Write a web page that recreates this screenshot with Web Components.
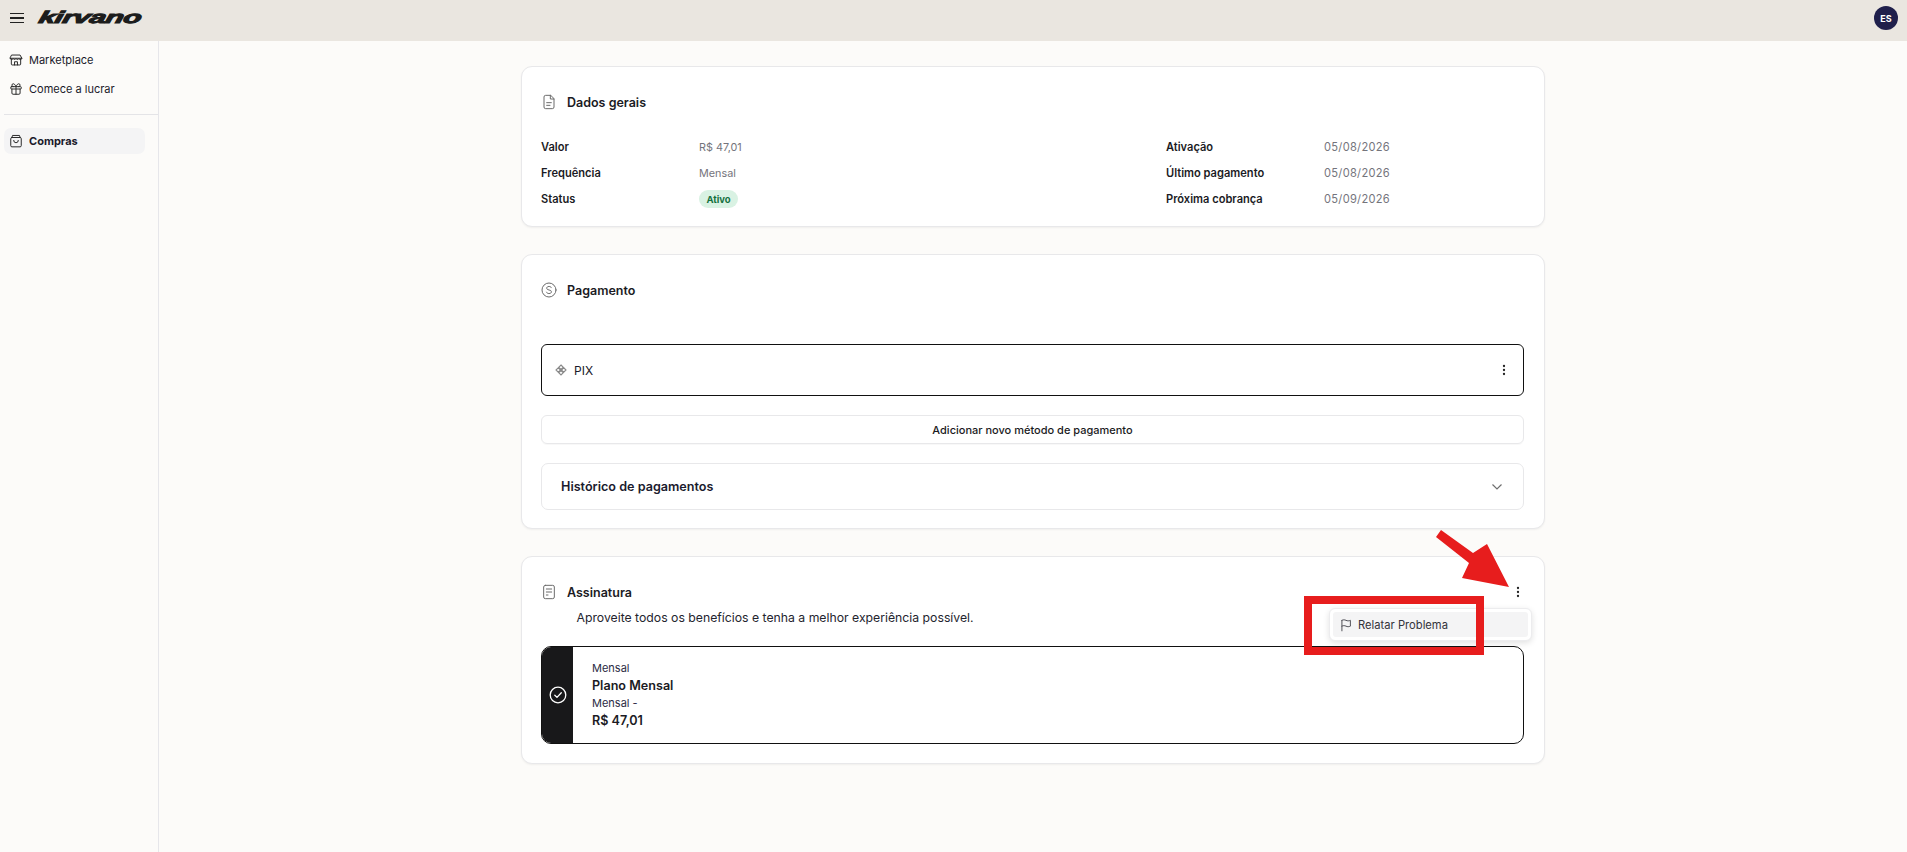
<!DOCTYPE html>
<html lang="pt-BR">
<head>
<meta charset="utf-8">
<title>Kirvano - Compras</title>
<style>
    html, body { margin: 0; padding: 0; height: 100%; overflow: hidden; background: #fcfbf9; }
    body { font-family: Inter, "Liberation Sans", sans-serif; font-size: 12px; color: #18181f; }
</style>
</head>
<body>
<k-app>
    <k-header slot="header"></k-header>
    <k-sidebar slot="sidebar">
        <k-nav-item icon="store">Marketplace</k-nav-item>
        <k-nav-item icon="gift">Comece a lucrar</k-nav-item>
        <k-nav-item slot="active" icon="bag" active>Compras</k-nav-item>
    </k-sidebar>

    <k-card icon="file" heading="Dados gerais" style="height:161px">
        <k-details>
            <k-row label="Valor">R$ 47,01</k-row>
            <k-row label="Ativação" date>05/08/2026</k-row>
            <k-row label="Frequência">Mensal</k-row>
            <k-row label="Último pagamento" date>05/08/2026</k-row>
            <k-row label="Status"><k-badge>Ativo</k-badge></k-row>
            <k-row label="Próxima cobrança" date>05/09/2026</k-row>
        </k-details>
    </k-card>

    <k-card icon="coin" heading="Pagamento" style="height:275px">
        <k-payment-list>
            <k-method>PIX</k-method>
            <k-add-button>Adicionar novo método de pagamento</k-add-button>
            <k-accordion>Histórico de pagamentos</k-accordion>
        </k-payment-list>
    </k-card>

    <k-card icon="list" heading="Assinatura" style="height:208px" menu>
        <k-plan-text>Aproveite todos os benefícios e tenha a melhor experiência possível.</k-plan-text>
        <k-plan></k-plan>
    </k-card>

    <k-menu></k-menu>
    <k-callout></k-callout>
</k-app>

<script>
// ICONOS -------------------------------------------------------------------------------------
const ICONS = {
    store: '<path d="M4 10v9a1.5 1.5 0 0 0 1.5 1.5h13A1.5 1.5 0 0 0 20 19v-9"/><path d="M5 3.5h14L22 9a2.6 2.6 0 0 1-5 .6 2.8 2.8 0 0 1-5 0 2.8 2.8 0 0 1-5 0A2.6 2.6 0 0 1 2 9z"/><path d="M2 9h20"/><path d="M9.5 20.5V15h5v5.5"/>',
    gift: '<rect x="3" y="8" width="18" height="4" rx="1"/><path d="M12 8v13"/><path d="M19 12v7a2 2 0 0 1-2 2H7a2 2 0 0 1-2-2v-7"/><path d="M7.5 8a2.5 2.5 0 0 1 0-5C10 3 12 8 12 8s2-5 4.500-5a2.500 2.500 0 0 1 0 5"/>',
    bag: '<rect x="3" y="6" width="18" height="16" rx="2"/><path d="M5 6l1-3.500h12L19 6"/><path d="M8 11a4 4 0 0 0 8 0"/>',
    file: '<path d="M14 2H7a2.500 2.500 0 0 0-2.500 2.500v15A2.500 2.500 0 0 0 7 22h10a2.500 2.500 0 0 0 2.500-2.500V7.500z"/><path d="M14 2v5.500h5.500"/><path d="M8.500 13h7M8.500 17h5"/>',
    coin: '<circle cx="12" cy="12" r="10.500"/><path d="M15.500 8.500C15 7.300 13.700 6.700 12 6.700c-2 0-3.500 1-3.500 2.600 0 3.700 7.200 1.700 7.200 5.400 0 1.600-1.600 2.600-3.700 2.600-1.800 0-3.200-.7-3.800-2"/>',
    list: '<rect x="4" y="2" width="16" height="20" rx="2.500"/><path d="M8 7.500h8M8 12h8M8 16.500h2.500"/>',
    flag: '<path d="M5 22V4"/><path d="M5 4c2-1.200 4.500-1.200 7 0s5 1.200 7.500 0v10c-2.500 1.200-5 1.200-7.500 0s-5-1.200-7 0"/>'
};

function icon(name, size, color, width) {
    return `<svg width="${size}" height="${size}" viewBox="0 0 24 24" fill="none" stroke="${color}" stroke-width="${width}" stroke-linecap="round" stroke-linejoin="round">${ICONS[name]}</svg>`;
}

const DOTS = `<svg width="12" height="12" viewBox="0 0 12 12" fill="#222"><circle cx="6" cy="2" r="1.150"/><circle cx="6" cy="6" r="1.150"/><circle cx="6" cy="10" r="1.150"/></svg>`;

// ELEMENTO BASE ------------------------------------------------------------------------------
class KBase extends HTMLElement {
    constructor() {
        super();
        this.attachShadow({mode: 'open'});
    }
    connectedCallback() {
        this.render();
    }
}

// LAYOUT -------------------------------------------------------------------------------------
class KApp extends KBase {
    render() {
        this.shadowRoot.innerHTML = `
            <style>
                :host { display: grid; grid-template-rows: 41px 1fr; grid-template-columns: 159px 1fr; height: 852px; position: relative; }
                .top { grid-column: 1 / 3; }
                main { display: flex; flex-direction: column; align-items: center; gap: 27px; padding-top: 25px; }
            </style>
            <div class="top"><slot name="header"></slot></div>
            <slot name="sidebar"></slot>
            <main><slot></slot></main>
        `;
    }
}

class KHeader extends KBase {
    render() {
        this.shadowRoot.innerHTML = `
            <style>
                :host { display: flex; align-items: center; height: 41px; background: #eae6e0; padding: 0 10px 5px; box-sizing: border-box; }
                .burger { display: flex; flex-direction: column; gap: 3px; width: 14px; margin-right: 15px; }
                .burger i { display: block; height: 1.500px; background: #222; }
                .logo { font: italic 900 17px "Liberation Sans", sans-serif; letter-spacing: -.3px; color: #1c1c1c;
                        display: inline-block; transform: scaleX(1.750) skewX(-8deg); transform-origin: left center;
                        -webkit-text-stroke: 1px #1c1c1c; }
                .avatar { margin-left: auto; width: 24px; height: 24px; border-radius: 50%; background: #1f1f4b; color: #fff;
                          font: 700 9px Inter, sans-serif; display: flex; align-items: center; justify-content: center;
                          margin-right: -1px; }
            </style>
            <div class="burger"><i></i><i></i><i></i></div>
            <span class="logo">kirvano</span>
            <div class="avatar">ES</div>
        `;
    }
}

class KSidebar extends KBase {
    render() {
        this.shadowRoot.innerHTML = `
            <style>
                :host { display: block; border-right: 1px solid #e6e6ea; box-sizing: border-box; height: 811px; padding: 4px 0 0 4px; }
                hr { border: 0; border-top: 1px solid #e4e4e7; margin: 11px 0 13px; }
                .items { padding-right: 13px; }
                .active { padding-right: 13px; }
            </style>
            <div class="items"><slot></slot></div>
            <hr>
            <div class="active"><slot name="active"></slot></div>
        `;
    }
}

class KNavItem extends KBase {
    render() {
        const active = this.hasAttribute('active');
        this.shadowRoot.innerHTML = `
            <style>
                :host { display: flex; align-items: center; gap: 6px; height: ${active ? 26 : 29}px; padding-left: 5px;
                        border-radius: 7px; background: ${active ? '#f4f4f5' : 'transparent'};
                        font-weight: ${active ? 700 : 400}; font-size: 11px; color: #1a1a2b; }
                svg { flex: none; }
            </style>
            ${icon(this.getAttribute('icon'), 14, '#2b2b2b', 1.700)}
            <span><slot></slot></span>
        `;
    }
}

// TARJETAS -----------------------------------------------------------------------------------
class KCard extends KBase {
    render() {
        this.shadowRoot.innerHTML = `
            <style>
                :host { display: block; box-sizing: border-box; width: 1024px; flex: none; background: #fff;
                        border: 1px solid #e8e8ea; border-radius: 11px; box-shadow: 0 1px 2px rgba(0,0,0,.05);
                        padding: 0 20px 0 19px; }
                header { display: flex; align-items: center; height: 70px; gap: 10px; font-size: 12.500px; font-weight: 600; color: #1b1b24; }
                header svg { flex: none; }
                .dots { margin-left: auto; display: ${this.hasAttribute('menu') ? 'flex' : 'none'}; margin-right: 0; }
            </style>
            <header>
                ${icon(this.getAttribute('icon'), 16, '#6b6b6b', 1.500)}
                <span>${this.getAttribute('heading')}</span>
                <span class="dots">${DOTS}</span>
            </header>
            <slot></slot>
        `;
    }
}

class KDetails extends KBase {
    render() {
        this.shadowRoot.innerHTML = `
            <style>
                :host { display: grid; grid-template-columns: 625px 1fr; grid-auto-rows: 26px; margin-top: -3px; }
            </style>
            <slot></slot>
        `;
    }
}

class KRow extends KBase {
    render() {
        const date = this.hasAttribute('date');
        this.shadowRoot.innerHTML = `
            <style>
                :host { display: flex; align-items: center; font-size: 11.100px; }
                b { width: 158px; font-weight: 600; color: #1b1b24; flex: none; }
                span { color: #74747c; font-size: ${date ? '11.100px' : '10.800px'}; letter-spacing: ${date ? '.3px' : '0'}; }
            </style>
            <b>${this.getAttribute('label')}</b>
            <span><slot></slot></span>
        `;
    }
}

class KBadge extends KBase {
    render() {
        this.shadowRoot.innerHTML = `
            <style>
                :host { display: inline-flex; align-items: center; justify-content: center; width: 39px; height: 18px;
                        border-radius: 9px; background: #d9f2e3; color: #15713f; font-size: 9.500px; font-weight: 700; letter-spacing: 0; }
            </style>
            <slot></slot>
        `;
    }
}

// PAGAMENTO ----------------------------------------------------------------------------------
class KPaymentList extends KBase {
    render() {
        this.shadowRoot.innerHTML = `
            <style>
                :host { display: flex; flex-direction: column; gap: 19px; padding-top: 19px; }
            </style>
            <slot></slot>
        `;
    }
}

class KMethod extends KBase {
    render() {
        this.shadowRoot.innerHTML = `
            <style>
                :host { display: flex; align-items: center; height: 52px; box-sizing: border-box; border: 1px solid #111;
                        border-radius: 6px; padding: 0 13px 0 13px; gap: 7px; font-size: 12px; color: #1a1a2b; }
                .dots { margin-left: auto; display: flex; }
                svg { flex: none; }
            </style>
            <svg width="12" height="12" viewBox="0 0 24 24" fill="none" stroke="#8a8a8a" stroke-width="2.200">
                <path d="M12 2l4.500 4.500L12 11 7.500 6.500zM12 13l4.500 4.500L12 22l-4.500-4.500zM6.500 7.500L11 12l-4.500 4.500L2 12zM17.500 7.500L22 12l-4.500 4.500L13 12z"/>
            </svg>
            <span><slot></slot></span>
            <span class="dots">${DOTS}</span>
        `;
    }
}

class KAddButton extends KBase {
    render() {
        this.shadowRoot.innerHTML = `
            <style>
                :host { display: flex; align-items: center; justify-content: center; height: 29px; box-sizing: border-box;
                        border: 1px solid #e8e8ea; border-radius: 6px; font-size: 11px; font-weight: 500; color: #1a1a22;
                        box-shadow: 0 1px 1px rgba(0,0,0,.03); }
            </style>
            <slot></slot>
        `;
    }
}

class KAccordion extends KBase {
    render() {
        this.shadowRoot.innerHTML = `
            <style>
                :host { display: flex; align-items: center; justify-content: space-between; height: 47px; box-sizing: border-box;
                        border: 1px solid #e8e8ea; border-radius: 7px; padding: 0 20px 0 19px; font-size: 12.600px; font-weight: 600; color: #1b1b2e; }
            </style>
            <span><slot></slot></span>
            <svg width="12" height="8" viewBox="0 0 12 8" fill="none" stroke="#6f6f6f" stroke-width="1.200"><path d="M1.500 1.500L6 6l4.500-4.500"/></svg>
        `;
    }
}

// ASSINATURA ---------------------------------------------------------------------------------
class KPlanText extends KBase {
    render() {
        this.shadowRoot.innerHTML = `
            <style>
                :host { display: block; margin: -17px 0 0 35.500px; height: 36px; font-size: 12.240px; line-height: 16px; color: #24242e; }
            </style>
            <slot></slot>
        `;
    }
}

class KPlan extends KBase {
    render() {
        this.shadowRoot.innerHTML = `
            <style>
                :host { display: flex; height: 98px; box-sizing: border-box; border: 1px solid #111; border-radius: 10px; overflow: hidden; }
                .strip { width: 31px; background: #18181a; display: flex; align-items: center; justify-content: center; flex: none; }
                .body { padding: 12px 0 0 19px; display: grid; grid-auto-rows: 17.600px; align-items: center; font-size: 11px; color: #2c2c44; }
                b { font-size: 12.600px; font-weight: 600; color: #1b1b24; }
            </style>
            <div class="strip">
                <svg width="18" height="18" viewBox="0 0 18 18" fill="none" stroke="#fff" stroke-width="1.300">
                    <circle cx="9" cy="9" r="7.800"/><path d="M5.800 9.200l2.200 2.200 4.300-4.600" stroke-linecap="round" stroke-linejoin="round"/>
                </svg>
            </div>
            <div class="body">
                <span>Mensal</span>
                <b>Plano Mensal</b>
                <span>Mensal -</span>
                <b>R$ 47,01</b>
            </div>
        `;
    }
}

// SUPERPUESTOS -------------------------------------------------------------------------------
class KMenu extends KBase {
    render() {
        this.shadowRoot.innerHTML = `
            <style>
                :host { position: absolute; left: 1329px; top: 608px; width: 203px; height: 33px; box-sizing: border-box; padding: 3px;
                        background: #fff; border: 1px solid #ececee; border-radius: 6px; box-shadow: 0 2px 6px rgba(0,0,0,.12); }
                div { display: flex; align-items: center; gap: 5px; height: 100%; padding-left: 6px; border-radius: 3px;
                      background: #f4f4f5; font-size: 11.200px; font-weight: 400; color: #33333b; }
            </style>
            <div>${icon('flag', 14, '#3a3a42', 1.500)}<span>Relatar Problema</span></div>
        `;
    }
}

class KCallout extends KBase {
    render() {
        this.shadowRoot.innerHTML = `
            <style>
                :host { position: absolute; inset: 0; pointer-events: none; display: block; }
                .box { position: absolute; left: 1304px; top: 596px; width: 180px; height: 59px; box-sizing: border-box; border: 8.500px solid #e71d1d; }
                svg { position: absolute; left: 0; top: 0; }
            </style>
            <div class="box"></div>
            <svg width="1907" height="852">
                <polygon fill="#e71d1d" points="1436,537 1441,530 1473,553 1487,544 1509,587 1462,578 1469,563"/>
            </svg>
        `;
    }
}

customElements.define('k-app', KApp);
customElements.define('k-header', KHeader);
customElements.define('k-sidebar', KSidebar);
customElements.define('k-nav-item', KNavItem);
customElements.define('k-card', KCard);
customElements.define('k-details', KDetails);
customElements.define('k-row', KRow);
customElements.define('k-badge', KBadge);
customElements.define('k-payment-list', KPaymentList);
customElements.define('k-method', KMethod);
customElements.define('k-add-button', KAddButton);
customElements.define('k-accordion', KAccordion);
customElements.define('k-plan-text', KPlanText);
customElements.define('k-plan', KPlan);
customElements.define('k-menu', KMenu);
customElements.define('k-callout', KCallout);
</script>
</body>
</html>
